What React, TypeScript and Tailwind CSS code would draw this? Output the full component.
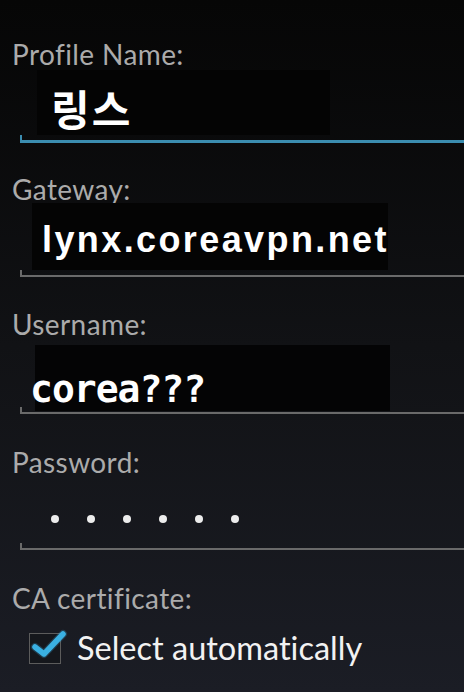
const Underline = ({ active = false, tick = 7 }: { active?: boolean; tick?: number }) => {
    const color = active ? "bg-[#3b8db0]" : "bg-[#6a6a6a]";
    return (
        <div className="flex items-end pl-[20px]" style={{ height: tick }}>
            <div className={`w-[2px] h-full ${color}`}></div>
            <div className={`flex-1 ${active ? "h-[3px]" : "h-[2px]"} ${color}`}></div>
        </div>
    );
};

const Label = ({ text, className = "" }: { text: string; className?: string }) => (
    <div className={`pl-[12px] h-[28px] text-[28px] leading-[28px] tracking-[0.4px] text-[#ababab] font-['Lato',sans-serif] [font-variant-ligatures:none] ${className}`}>
        {text}
    </div>
);

export default function App() {
    return (
        <div className="w-[464px] h-[692px] overflow-hidden flex flex-col pt-[40px] bg-gradient-to-b from-[#060606] via-[#111215] to-[#1b1d25]">
            <Label text="Profile Name:" />
            <div className="mt-[2px] ml-[37px] w-[293px] h-[65px] bg-[#040404] pt-[17px] pl-[14px] text-white font-bold text-[42px] leading-none tracking-[2px] font-['Noto_Sans_CJK_KR',sans-serif]">
                링스
            </div>
            <Underline active tick={8} />

            <Label text="Gateway:" className="mt-[32px]" />
            <div className="ml-[32px] w-[356px] h-[67px] bg-[#040404] pt-[19px] pl-[10px] text-white font-bold text-[36px] leading-none tracking-[2.4px] font-['Liberation_Sans',Arial,sans-serif]">
                lynx.coreavpn.net
            </div>
            <Underline />

            <Label text="Username:" className="mt-[33px]" />
            <div className="mt-[7px] ml-[35px] w-[355px] h-[66px] bg-[#040405] pt-[25px] text-white font-bold text-[38px] leading-none tracking-[-1px] font-['DejaVu_Sans_Mono',monospace]">
                <span className="-ml-[5px]">corea???</span>
            </div>
            <div className="-mt-[4px]">
                <Underline />
            </div>

            <Label text="Password:" className="mt-[34px]" />
            <div className="h-[67px] pt-[19px] pl-[51px] flex items-center gap-[28px]">
                {[0, 1, 2, 3, 4, 5].map((i) => (
                    <div key={i} className="w-[8px] h-[8px] rounded-full bg-[#ececec]"></div>
                ))}
            </div>
            <Underline />

            <Label text="CA certificate:" className="mt-[34px]" />
            <div className="mt-[16px] flex items-center h-[40px]">
                <div className="relative ml-[29px] w-[32px] h-[31px] border-[1.5px] border-[#5c5c5c] bg-[#15171c]">
                    <svg className="absolute -left-[1px] -top-[1px] overflow-visible" width="40" height="32" viewBox="0 0 40 32">
                        <path d="M6 14 L15 21 L34 1" fill="none" stroke="#3aa4d6" strokeWidth="8" strokeLinecap="round" strokeLinejoin="round" opacity="0.25" />
                        <path d="M6 14 L15 21 L34 1" fill="none" stroke="#3ab0e2" strokeWidth="5.5" strokeLinecap="round" strokeLinejoin="round" />
                    </svg>
                </div>
                <div className="ml-[16px] text-[32.5px] leading-[40px] text-[#f2f2f2] font-['Lato',sans-serif] [font-variant-ligatures:none]">
                    Select automatically
                </div>
            </div>
        </div>
    );
}
